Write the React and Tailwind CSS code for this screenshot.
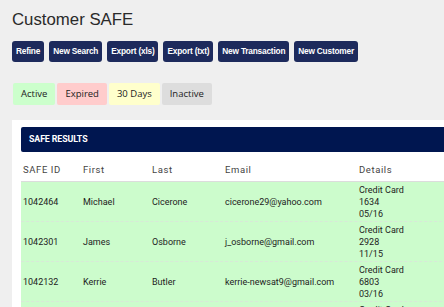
const buttons = ["Refine", "New Search", "Export (xls)", "Export (txt)", "New Transaction", "New Customer"];

const statuses = [
  { label: "Active", bg: "bg-[#ccffcc]" },
  { label: "Expired", bg: "bg-[#ffcccc]" },
  { label: "30 Days", bg: "bg-[#ffffcc]" },
  { label: "Inactive", bg: "bg-[#dddddd]" },
];

const rows = [
  { id: "1042464", first: "Michael", last: "Cicerone", email: "cicerone29@yahoo.com", card: "1634", exp: "05/16" },
  { id: "1042301", first: "James", last: "Osborne", email: "j_osborne@gmail.com", card: "2928", exp: "11/15" },
  { id: "1042132", first: "Kerrie", last: "Butler", email: "kerrie-newsat9@gmail.com", card: "6803", exp: "03/16" },
  { id: "1041987", first: "Daniel", last: "Haynes", email: "dhaynes@outlook.com", card: "4417", exp: "08/16" },
];

export default function App() {
  return (
    <div className="h-[307px] w-[444px] overflow-hidden bg-[#efefef] pl-[12px] pt-[9px] font-['Roboto',sans-serif] text-[#222]">
      <h1 className="font-['Liberation_Sans',Arial,sans-serif] text-[16.8px] leading-[22px] text-[#2a2a2a]">Customer SAFE</h1>

      <div className="mt-[10px] flex gap-[5px]">
        {buttons.map((b) => (
          <button
            key={b}
            type="button"
            className="h-[21px] whitespace-nowrap rounded-[3px] bg-[#1d2a5c] px-[4px] font-['Liberation_Sans',Arial,sans-serif] text-[8.3px] font-bold tracking-[-0.2px] text-white"
          >
            {b}
          </button>
        ))}
      </div>

      <div className="mt-[21px] flex gap-[2px] pl-[1px]">
        {statuses.map((s) => (
          <span
            key={s.label}
            className={`flex h-[22px] items-center rounded-[2px] px-[8px] font-['Open_Sans',sans-serif] text-[9.5px] ${s.bg}`}
          >
            {s.label}
          </span>
        ))}
      </div>

      <div className="mt-[15px] w-[470px] bg-white pl-[9px] pt-[7px]">
        <div className="flex h-[25px] items-center rounded-l-[2px] bg-[#001650] pl-[8px] text-[8.8px] font-bold tracking-[-0.1px] text-white">
          SAFE RESULTS
        </div>

        <div className="flex border-b border-[#dcdcdc] pb-[5px] pl-[2px] pt-[12px] text-[9.5px] leading-[12px] tracking-[0.6px] text-[#444]">
          <div className="w-[60px]">SAFE ID</div>
          <div className="w-[69px]">First</div>
          <div className="w-[73px]">Last</div>
          <div className="w-[134px]">Email</div>
          <div>Details</div>
        </div>

        {rows.map((r) => (
          <div
            key={r.id}
            className="flex h-[40px] items-center border-b border-dashed border-[#d8e8d8] bg-[#ccfccc] pl-[2px] text-[9px] leading-[12px]"
          >
            <div className="w-[60px]">{r.id}</div>
            <div className="w-[69px]">{r.first}</div>
            <div className="w-[73px]">{r.last}</div>
            <div className="w-[134px]">{r.email}</div>
            <div>
              <div>Credit Card</div>
              <div>{r.card}</div>
              <div>{r.exp}</div>
            </div>
          </div>
        ))}
      </div>
    </div>
  );
}
